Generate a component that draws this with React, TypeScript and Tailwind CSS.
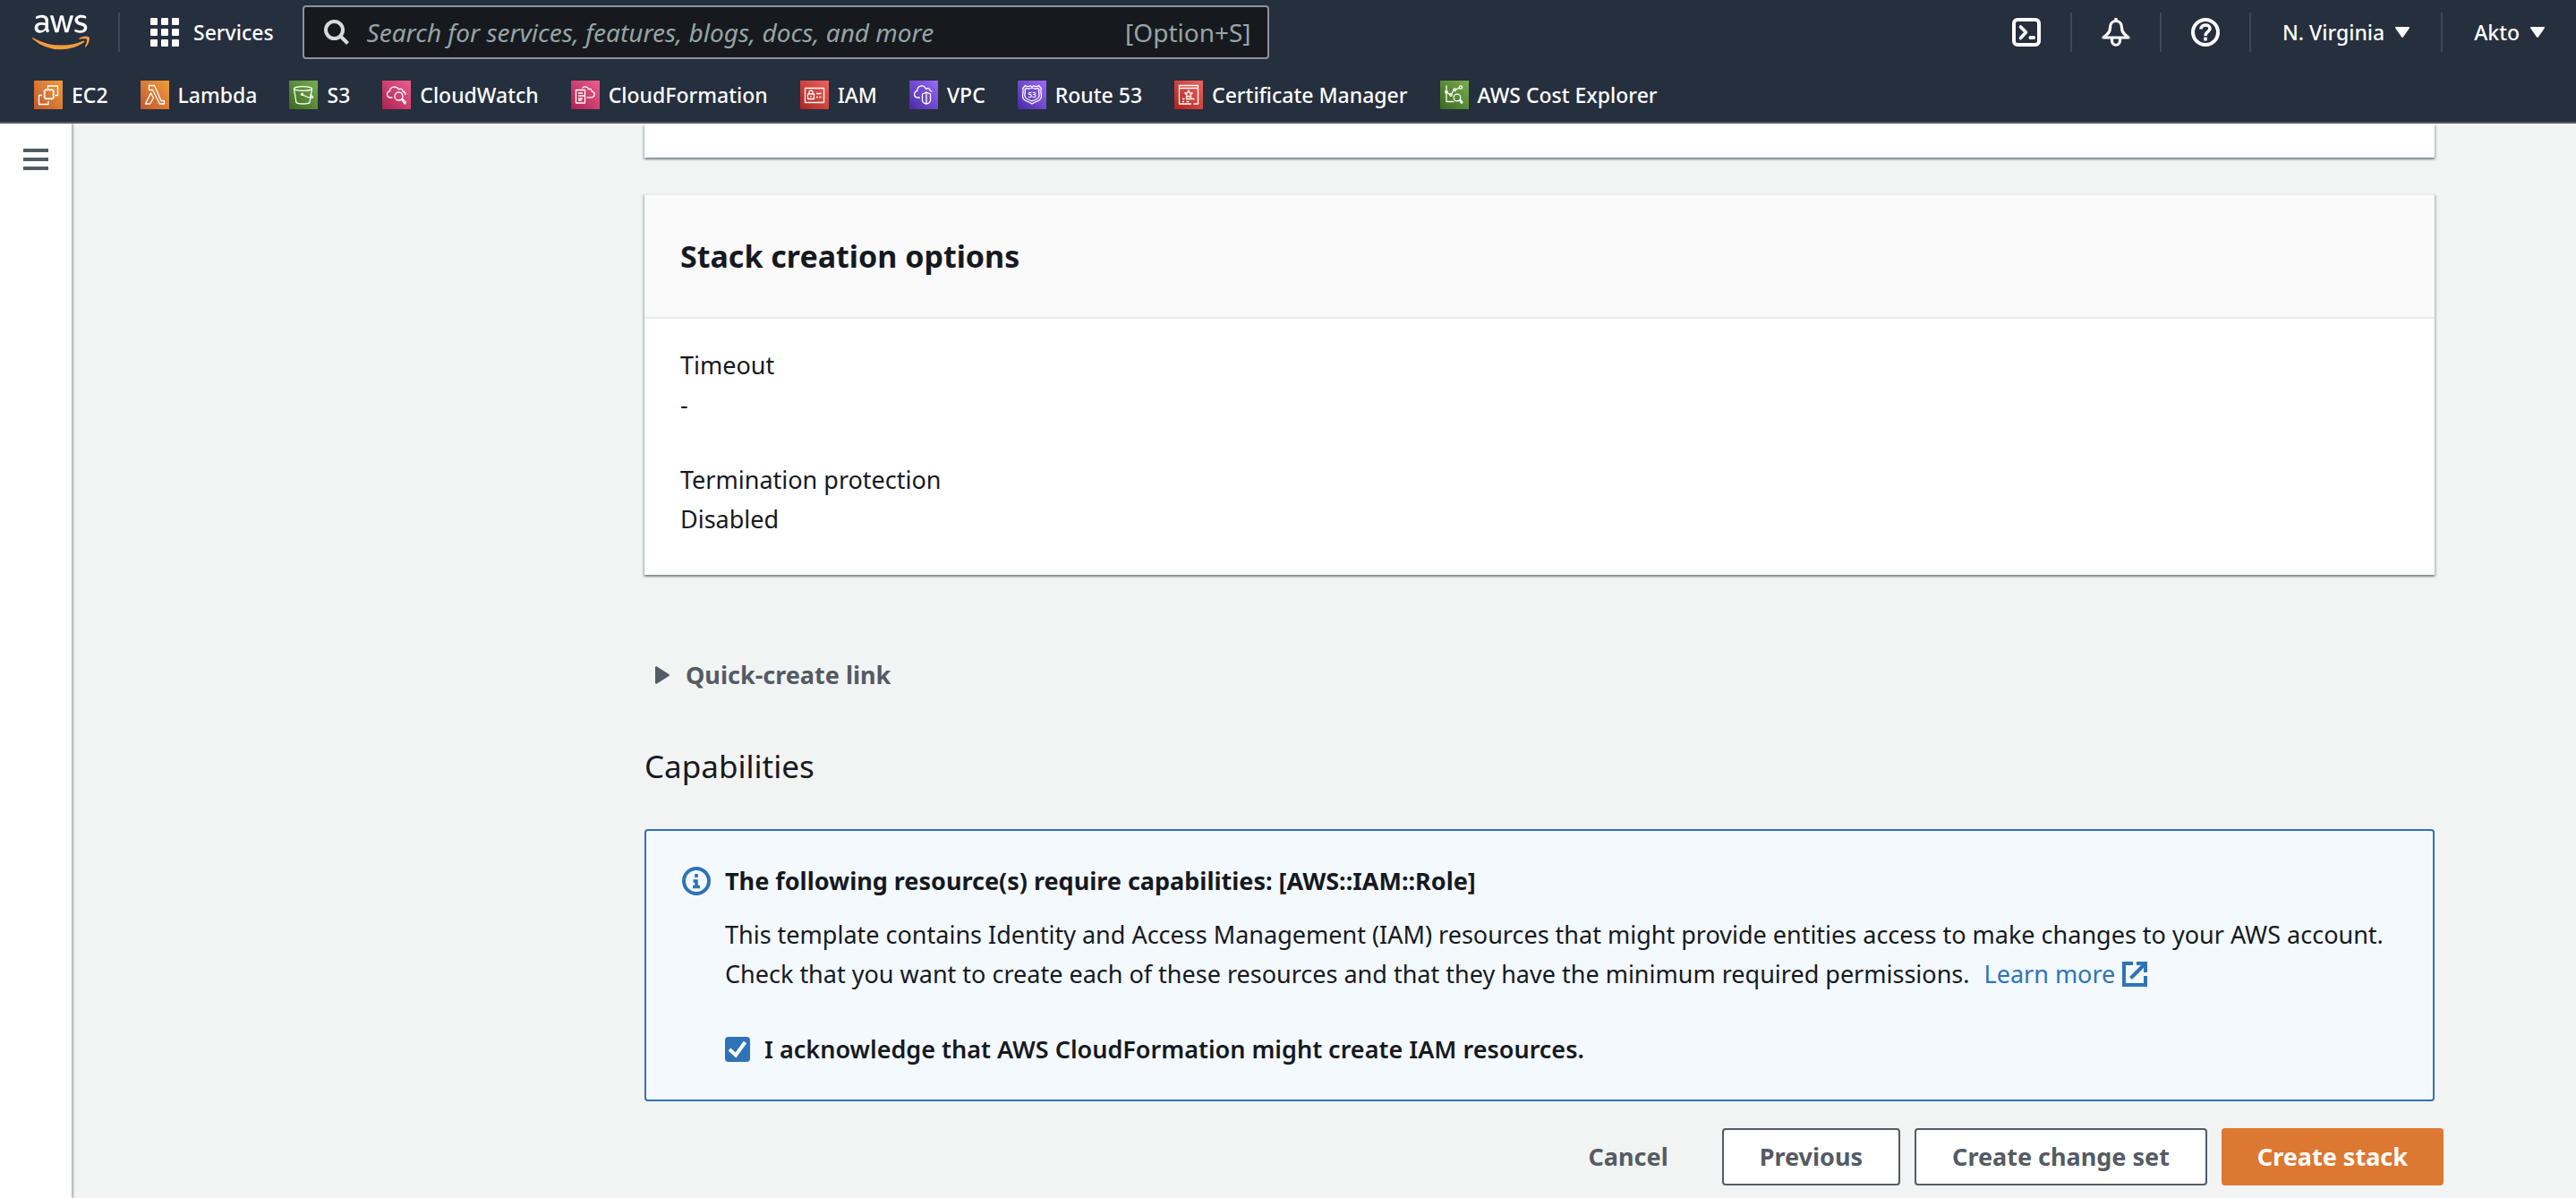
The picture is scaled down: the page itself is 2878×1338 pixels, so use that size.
import type { ReactNode } from "react";
import { FaAws } from "react-icons/fa";

type Tone = "orange" | "green" | "pink" | "red" | "purple";

const tones: Record<Tone, string> = {
  orange: "bg-linear-to-tr from-[#c0582d] to-[#f19d3b]",
  green: "bg-linear-to-tr from-[#38691f] to-[#7bae52]",
  pink: "bg-linear-to-tr from-[#a9214f] to-[#ee5d91]",
  red: "bg-linear-to-tr from-[#ae2321] to-[#ee625c]",
  purple: "bg-linear-to-tr from-[#4a29a3] to-[#9d69f8]",
};

const services: { name: string; tone: Tone; art: ReactNode }[] = [
  {
    name: "EC2",
    tone: "orange",
    art: (
      <>
        <path d="M15.5 9V6h11v10.5h-3M9 16.5H5.5v10H16V23" />
        <rect x="12" y="10.5" width="9.5" height="9.5" />
        <path d="M14 10.5V9M16.7 10.5V9M19.5 10.5V9M14 21.5V20M16.7 21.5V20M19.5 21.5V20M12 12.5h-1.5M12 15.2h-1.5M12 18h-1.5M23 12.5h-1.5M23 15.2h-1.5M23 18h-1.5" />
      </>
    ),
  },
  {
    name: "Lambda",
    tone: "orange",
    art: <path d="M9.5 5.5h6l7.5 17h3.5v3.500h-5l-8-15.500h-4zM11.500 14l3 5.500-4 6.500h-5z" />,
  },
  {
    name: "S3",
    tone: "green",
    art: (
      <>
        <ellipse cx="15.5" cy="9" rx="10" ry="2.3" />
        <path d="M5.5 9.5l2.500 15c2 2 13 2 15 0l2.500-15M14.500 15.500c4 2.300 9 4 12 3.500.5-1-1-2-3-2.800" />
        <circle cx="14.5" cy="15.3" r="1" fill="white" />
      </>
    ),
  },
  {
    name: "CloudWatch",
    tone: "pink",
    art: (
      <>
        <path d="M11.5 19H9.500c-5 0-5-6.500-.8-7.300C8.500 7 16 5 18.500 10c2-1.800 4.500-.5 4.500 2 2 .4 3 2 3 4" />
        <circle cx="18.5" cy="17.5" r="4.5" />
        <path d="M21.5 21l1-.8 4 4-1.300 1.800z" />
      </>
    ),
  },
  {
    name: "CloudFormation",
    tone: "pink",
    art: (
      <>
        <path d="M5.5 10.500h10V25h-10zM8 14h5M8 17h7M8 20h5M12 22h-4" />
        <path d="M12.5 8.500c1.500-2.500 6-2 7 1.300 2-1.300 3.500 0 3.500 2 4 .8 4.500 6.500-.5 7h-5" />
      </>
    ),
  },
  {
    name: "IAM",
    tone: "red",
    art: (
      <>
        <rect x="5.5" y="8.5" width="21" height="16" />
        <rect x="8.5" y="15" width="7" height="5.5" />
        <path d="M10 15v-2c0-2.500 4-2.500 4 0v2M12 17v1.500M18 14.500h5.500M18 18.500h2M21.500 18.500h2" />
      </>
    ),
  },
  {
    name: "VPC",
    tone: "purple",
    art: (
      <>
        <path d="M12 19H9.500c-5 0-5-6.500-.8-7.300C8.500 5.500 16 3.500 18.500 9.500c2-1.800 4.500-.5 4.500 1.500l2.500 1.500" />
        <path d="M19 13l4.500 2v7c0 2-2.500 4-4.500 4s-4.500-2-4.500-4v-7zM19 13v13" />
      </>
    ),
  },
  {
    name: "Route 53",
    tone: "purple",
    art: (
      <>
        <path d="M8.5 5.500c2 1.500 4 1.300 5.500.3L16 7l2-1.200c1.500 1 3.500 1.200 5.500-.3l3 3.500c-2 3 .5 5.500 0 9-.5 4-4 5-7 6l-3.500 2-3.500-2c-3-1-6.500-2-7-6-.5-3.500 2-6 0-9z" />
        <path d="M9.5 8.500c2 .8 4.500.5 6.500-.5 2 1 4.500 1.300 6.500.5l1.500 1.500c-1.200 3 .5 5 0 7.500-.5 3-5 4-8 5.500-3-1.500-7.500-2.500-8-5.500-.5-2.500 1.200-4.500 0-7.500z" />
        <text x="16" y="18.5" textAnchor="middle" fontSize="8" fontWeight="600" fill="white" stroke="none">
          53
        </text>
      </>
    ),
  },
  {
    name: "Certificate Manager",
    tone: "red",
    art: (
      <>
        <path d="M21.5 26h5V5.500h-21V26H19M5.500 8.500h21M9 20.500h2.500M13 20.500h9.500M9 23.500h2M13.500 23.500h3" />
        <path d="M16 11l1.200 2.800 3 .2-2.300 2 .8 3-2.700-1.700L13.300 19l.8-3-2.300-2 3-.2z" />
      </>
    ),
  },
  {
    name: "AWS Cost Explorer",
    tone: "green",
    art: (
      <>
        <path d="M7 5.500v18h8.500M8.200 13.500l3 2.500M12.500 15l3-4.500M17.500 10l4-1.800" />
        <circle cx="7" cy="12.7" r="1.3" />
        <circle cx="12" cy="16" r="1.3" />
        <circle cx="16.2" cy="10.2" r="1.3" />
        <circle cx="23" cy="7.5" r="1.6" />
        <circle cx="19" cy="19" r="3.8" />
        <path d="M21.5 22l1-.8 2.500 2.800-1.200 1.500z" />
      </>
    ),
  },
];

function Divider() {
  return <span className="h-11 w-0.5 shrink-0 bg-[#414750]" />;
}

function Caret() {
  return (
    <svg className="h-3 w-4" viewBox="0 0 16 12" fill="white" aria-hidden="true">
      <path d="M1 0h14c.9 0 1.300.9.800 1.500L9 11.300c-.5.9-1.500.9-2 0L.2 1.500C-.3.900.100 0 1 0z" />
    </svg>
  );
}

function TopBar() {
  return (
    <header className="relative z-10 border-b-2 border-[#545b64] bg-[#252f3e] text-[23px] font-medium text-white">
      <div className="flex h-18 items-center">
        <a href="#home" aria-label="AWS" className="ml-9 w-16">
          <svg className="absolute size-0" aria-hidden="true">
            <linearGradient id="aws-mark" gradientUnits="userSpaceOnUse" x1="0" y1="0" x2="0" y2="512">
              <stop offset="0.595" stopColor="white" />
              <stop offset="0.595" stopColor="#f09d3c" />
            </linearGradient>
          </svg>
          <FaAws className="h-13 w-16" fill="url(#aws-mark)" />
        </a>
        <span className="ml-8 flex">
          <Divider />
        </span>
        <button type="button" className="ml-8.5 flex items-center gap-4">
          <svg className="size-8" viewBox="0 0 32 32" fill="white" aria-hidden="true">
            {[0, 12, 24].map((y) =>
              [0, 12, 24].map((x) => <rect key={x + "-" + y} x={x} y={y} width="8" height="8" rx="1" />),
            )}
          </svg>
          Services
        </button>
        <div className="ml-8 flex h-15 w-270 items-center rounded border-2 border-[#879596] bg-[#17191e] px-5.5 text-[28px] font-normal text-[#95a5a6]">
          <svg className="h-7 w-7" viewBox="0 0 28 28" fill="none" stroke="#d5dbdb" strokeWidth="4" aria-hidden="true">
            <circle cx="11.5" cy="11.5" r="9.5" />
            <path d="M18 18l8.500 8.500" />
          </svg>
          <input
            type="search"
            aria-label="Search"
            placeholder="Search for services, features, blogs, docs, and more"
            className="ml-5 min-w-0 flex-1 bg-transparent italic outline-none placeholder:text-[#95a5a6]"
          />
          <span className="-mr-1">[Option+S]</span>
        </div>
        <div className="ml-auto flex items-center">
          <button type="button" aria-label="CloudShell" className="px-[33px]">
            <svg className="size-8" viewBox="0 0 32 32" fill="none" stroke="white" strokeWidth="4" aria-hidden="true">
              <rect x="2" y="2" width="28" height="28" rx="4" />
              <path d="M9.500 10l6 6-6 6.500" strokeWidth="3.6" strokeLinejoin="round" strokeLinecap="round" />
              <path d="M20.500 22h3.500" strokeLinecap="round" />
            </svg>
          </button>
          <Divider />
          <button type="button" aria-label="Notifications" className="px-[33px]">
            <svg className="size-8" viewBox="0 0 32 32" fill="none" stroke="white" strokeWidth="3.2" strokeLinejoin="round" aria-hidden="true">
              <path d="M16 3.500c-4 0-6.500 3-6.500 7.500 0 6-4 8-7.500 11h28c-3.500-3-7.500-5-7.500-11 0-4.500-2.500-7.500-6.500-7.500z" />
              <path d="M16 0v4" />
              <path d="M11.5 22.500v2.500c0 7 9 7 9 0v-2.500" />
            </svg>
          </button>
          <Divider />
          <button type="button" aria-label="Help" className="px-[33px]">
            <svg className="size-8" viewBox="0 0 32 32" fill="none" stroke="white" strokeWidth="4" aria-hidden="true">
              <circle cx="16" cy="16" r="14" />
              <path d="M11 12.500c0-6 10-6 10-.5 0 3.500-5 3.500-5 8M16 21.500v4" strokeWidth="3.6" />
            </svg>
          </button>
          <Divider />
          <button type="button" className="flex items-center gap-3 px-[35px]">
            N. Virginia
            <Caret />
          </button>
          <Divider />
          <button type="button" className="flex items-center gap-3 px-[35px]">
            Akto
            <Caret />
          </button>
        </div>
      </div>
      <nav aria-label="Favorites" className="flex h-16 items-center gap-9 pt-1 pl-9.5">
        {services.map((s) => (
          <a key={s.name} href={"#" + s.name} className="flex items-center gap-2.5 whitespace-nowrap">
            <span className={"size-8 " + tones[s.tone]}>
              <svg className="size-8" viewBox="0 0 32 32" fill="none" stroke="white" strokeWidth="1.3" strokeLinejoin="round" aria-hidden="true">
                {s.art}
              </svg>
            </span>
            {s.name}
          </a>
        ))}
      </nav>
    </header>
  );
}

const cardShadow = "shadow-[0_2px_2px_rgba(0,28,36,0.3),2px_2px_2px_rgba(0,28,36,0.15),-2px_2px_2px_rgba(0,28,36,0.15)]";

export default function App() {
  return (
    <div className="flex min-h-screen flex-col bg-[#f2f3f3] font-['Noto_Sans','Open_Sans',sans-serif] text-[27px] leading-11 text-[#16191f]">
      <TopBar />
      <div className="flex flex-1">
        <aside className="w-20 shrink-0 bg-white pt-7 shadow-[2px_0_2px_rgba(0,28,36,0.3)]">
          <button type="button" aria-label="Open navigation" className="mx-auto block">
            <svg className="h-6 w-7" viewBox="0 0 28 24" fill="#545b64" aria-hidden="true">
              <path d="M0 0h28v4H0zM0 10h28v4H0zM0 20h28v4H0z" />
            </svg>
          </button>
        </aside>
        <main className="flex-1 pr-37 pl-160">
          <div className="pr-2.5">
            <div className={"h-9.5 bg-white " + cardShadow} />
            <section className={"mt-10 border-t-2 border-[#eaeded] bg-white " + cardShadow}>
              <h2 className="border-b-2 border-[#eaeded] bg-[#fafafa] px-10 py-[46px] text-[34px] font-bold">Stack creation options</h2>
              <dl className="px-10 pt-7.5 pb-10">
                <dt>Timeout</dt>
                <dd>-</dd>
                <dt className="mt-10">Termination protection</dt>
                <dd>Disabled</dd>
              </dl>
            </section>
            <button type="button" className="mt-22.5 flex items-center gap-4.5 pl-3 font-bold text-[#545b64]">
              <svg className="h-5 w-4" viewBox="0 0 16 20" fill="#545b64" aria-hidden="true">
                <path d="M0 1.500C0 .3 1 0 2 .6L15.300 9c.9.600.9 1.400 0 2L2 19.400c-1 .6-2 .3-2-.9z" />
              </svg>
              Quick-create link
            </button>
            <h2 className="mt-14.5 text-[35px]">Capabilities</h2>
            <section className="mt-12 flex gap-4 rounded border-2 border-[#2e73b8] bg-[#f3f9fd] px-10 py-8.5">
              <svg className="mt-1.5 size-8 shrink-0" viewBox="0 0 32 32" fill="none" stroke="#2e73b8" strokeWidth="4" aria-hidden="true">
                <circle cx="16" cy="16" r="14" />
                <path d="M16 8v4M12.500 16H16v6M12 22.500h8" strokeWidth="3.6" />
              </svg>
              <div>
                <h3 className="font-bold">The following resource(s) require capabilities: [AWS::IAM::Role]</h3>
                <div className="mt-4">
                  <p>
                    This template contains Identity and Access Management (IAM) resources that might provide entities access to make changes to your AWS account.
                  </p>
                  <div className="flex flex-wrap gap-x-4">
                    <p>Check that you want to create each of these resources and that they have the minimum required permissions.</p>
                    <a href="#learn-more" className="flex items-center gap-2 text-[#2e73b8]">
                      Learn more
                      <svg className="size-7" viewBox="0 0 28 28" fill="none" stroke="#2e73b8" strokeWidth="4" aria-hidden="true">
                        <path d="M12 2H2v24h24V16M16 2h10v10M26 2L9.500 18.500" />
                      </svg>
                    </a>
                  </div>
                </div>
                <label className="mt-10 flex w-fit items-center gap-4 font-semibold">
                  <span className="relative flex">
                    <input type="checkbox" defaultChecked className="peer size-7 appearance-none rounded border-2 border-[#687078] bg-white checked:border-[#2e73b8] checked:bg-[#2e73b8]" />
                    <svg className="pointer-events-none absolute inset-0 hidden size-7 peer-checked:block" viewBox="0 0 28 28" fill="none" stroke="white" strokeWidth="4" aria-hidden="true">
                      <path d="M5 14l7 6.500L22.500 6" />
                    </svg>
                  </span>
                  I acknowledge that AWS CloudFormation might create IAM resources.
                </label>
              </div>
            </section>
          </div>
          <footer className="mt-7.5 flex h-16 justify-end gap-4 font-bold text-[#545b64]">
            <button type="button" className="px-11">Cancel</button>
            <button type="button" className="rounded border-2 border-[#545b64] bg-white px-10">Previous</button>
            <button type="button" className="rounded border-2 border-[#545b64] bg-white px-10">Create change set</button>
            <button type="button" className="rounded bg-[#dd7832] px-10 text-white">Create stack</button>
          </footer>
        </main>
      </div>
    </div>
  );
}
